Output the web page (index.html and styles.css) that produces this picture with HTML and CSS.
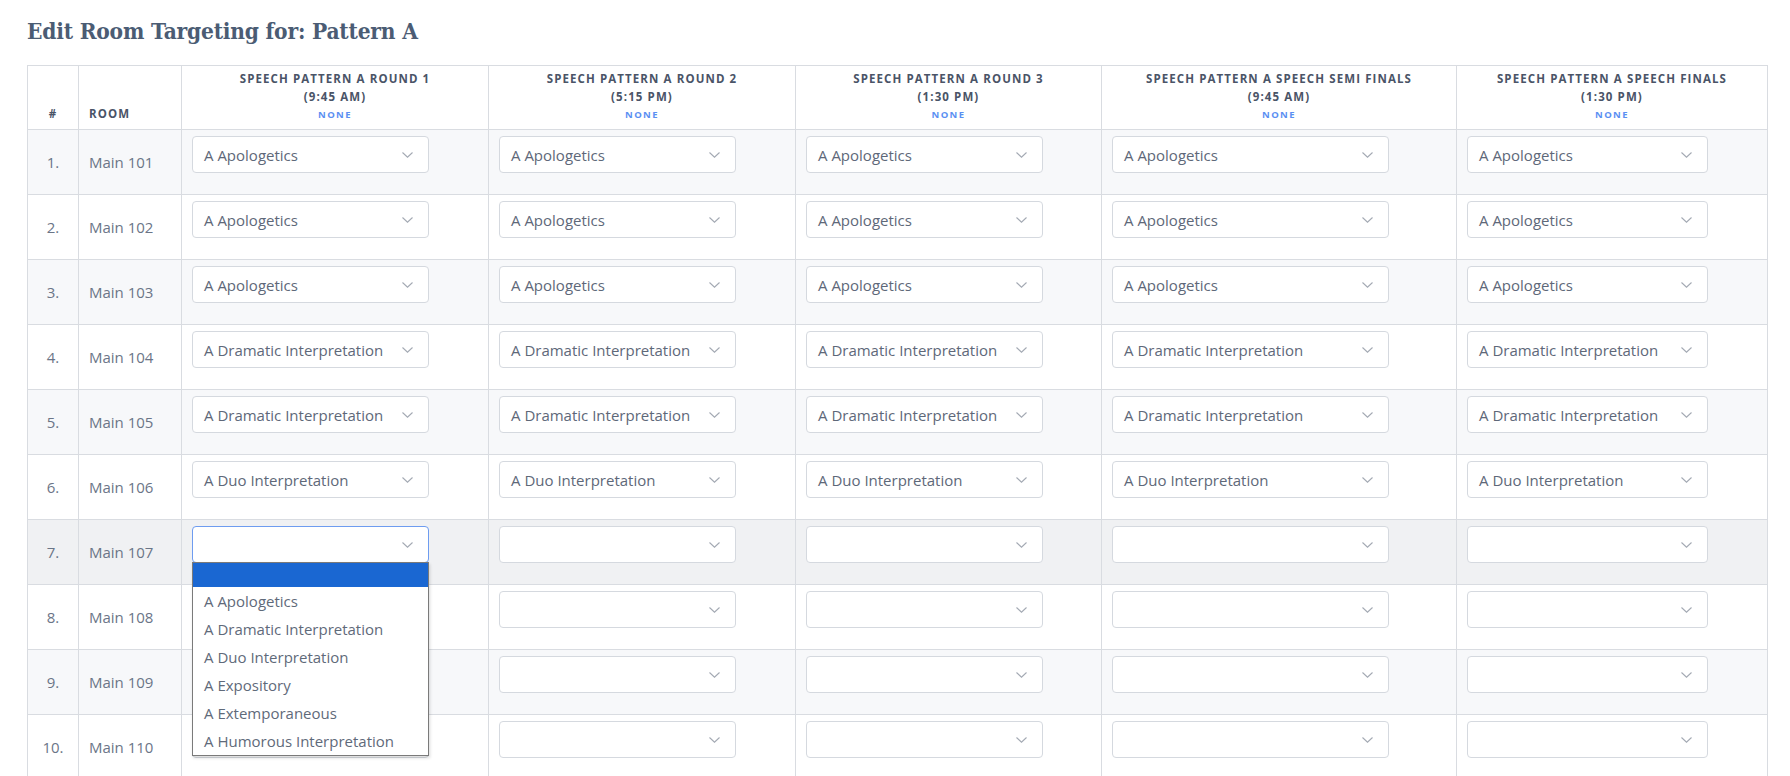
FILE: index.html
```html
<!DOCTYPE html>
<html lang="en">
<head>
    <meta charset="UTF-8">
    <title>Edit Room Targeting</title>
    <link rel="stylesheet" href="styles.css">
</head>
<body>
    <div class="page">
        <h1>Edit Room Targeting for: Pattern A</h1>

        <table class="targeting">
            <colgroup>
                <col style="width:51px">
                <col style="width:103px">
                <col style="width:307px">
                <col style="width:307px">
                <col style="width:306px">
                <col style="width:355px">
                <col style="width:311px">
            </colgroup>
            <thead>
                <tr>
                    <th class="num">#</th>
                    <th class="room">Room</th>
                    <th>Speech Pattern A Round 1<br>(9:45 AM)<span class="none">None</span></th>
                    <th>Speech Pattern A Round 2<br>(5:15 PM)<span class="none">None</span></th>
                    <th>Speech Pattern A Round 3<br>(1:30 PM)<span class="none">None</span></th>
                    <th>Speech Pattern A Speech Semi Finals<br>(9:45 AM)<span class="none">None</span></th>
                    <th>Speech Pattern A Speech Finals<br>(1:30 PM)<span class="none">None</span></th>
                </tr>
            </thead>
            <tbody id="rows"></tbody>
        </table>
    </div>

    <script>
        const rooms = [
            'A Apologetics', 'A Apologetics', 'A Apologetics',
            'A Dramatic Interpretation', 'A Dramatic Interpretation',
            'A Duo Interpretation', '', '', '', ''
        ];
        const options = [
            'A Apologetics',
            'A Dramatic Interpretation',
            'A Duo Interpretation',
            'A Expository',
            'A Extemporaneous',
            'A Humorous Interpretation'
        ];
        const chevron = '<svg width="11" height="6" viewBox="0 0 11 6"><path d="M0.5 0.5 L5.5 5.2 L10.5 0.5" fill="none" stroke="#a3a9b3" stroke-width="1.1"/></svg>';

        function selectBox(value, open) {
            let html = `<div class="select${open ? ' focused' : ''}"><span>${value}</span>${chevron}`;
            if (open) {
                html += '<div class="dropdown"><div class="option active"></div>';
                options.forEach(o => { html += `<div class="option">${o}</div>`; });
                html += '</div>';
            }
            return html + '</div>';
        }

        let html = '';
        rooms.forEach((value, i) => {
            html += `<tr class="${i === 6 ? 'hover' : ''}">
                <td class="num">${i + 1}.</td>
                <td class="room">Main ${101 + i}</td>`;
            for (let c = 0; c < 5; c++) {
                html += `<td class="pick">${selectBox(value, i === 6 && c === 0)}</td>`;
            }
            html += '</tr>';
        });
        document.getElementById('rows').innerHTML = html;
    </script>
</body>
</html>
```

FILE: styles.css
```css
body {
    margin: 0;
    font-family: "Open Sans", Arial, sans-serif;
    color: #5f6a7a;
    background: #fff;
}
.page {
    padding: 0 23px 0 27px;
}
h1 {
    font-family: "DejaVu Serif Condensed", "DejaVu Serif", serif;
    font-weight: bold;
    font-size: 22.5px;
    line-height: 28px;
    color: #4b5c74;
    margin: 17px 0 20px;
    letter-spacing: -0.2px;
}
.targeting {
    border-collapse: collapse;
    table-layout: fixed;
    width: 1740px;
}
.targeting th,
.targeting td {
    border: 1px solid #d9dce1;
}
.targeting th {
    height: 57px;
    padding: 0 8px 6px;
    font-size: 11.5px;
    line-height: 18px;
    font-weight: bold;
    letter-spacing: 1.1px;
    text-transform: uppercase;
    color: #4a5467;
    text-align: center;
    vertical-align: bottom;
}
.targeting th.room {
    text-align: left;
    padding-left: 10px;
}
.none {
    display: block;
    font-size: 9.5px;
    line-height: 17px;
    letter-spacing: 1.4px;
    color: #5b8ff2;
}
.targeting tbody tr:nth-child(odd) {
    background: #f7f8fa;
}
.targeting tbody tr.hover {
    background: #f0f1f3;
}
.targeting td {
    height: 65px;
    padding: 0 10px;
    font-size: 15px;
    color: #6b7587;
    vertical-align: middle;
    box-sizing: border-box;
}
.targeting td.num {
    text-align: center;
    padding: 0;
}
.targeting td.pick {
    vertical-align: top;
    padding-top: 6px;
}
.select {
    position: relative;
    width: 83%;
    height: 37px;
    box-sizing: border-box;
    border: 1px solid #d5d9df;
    border-radius: 4px;
    background: #fff;
    display: flex;
    align-items: center;
    justify-content: space-between;
    padding: 0 15px 0 11px;
    font-size: 15px;
    color: #5e6879;
}
.select svg {
    flex: none;
}
.select.focused {
    border-color: #6e9cf0;
}
.dropdown {
    position: absolute;
    top: 100%;
    left: -1px;
    right: -1px;
    background: #fff;
    border: 1px solid #7a7a7a;
    box-shadow: 1px 2px 3px rgba(0, 0, 0, 0.15);
    z-index: 5;
}
.option {
    height: 28px;
    line-height: 28px;
    padding-left: 11px;
    font-size: 15px;
    color: #5f6a7a;
}
.option.active {
    height: 24px;
    background: #1a67d2;
}
```
